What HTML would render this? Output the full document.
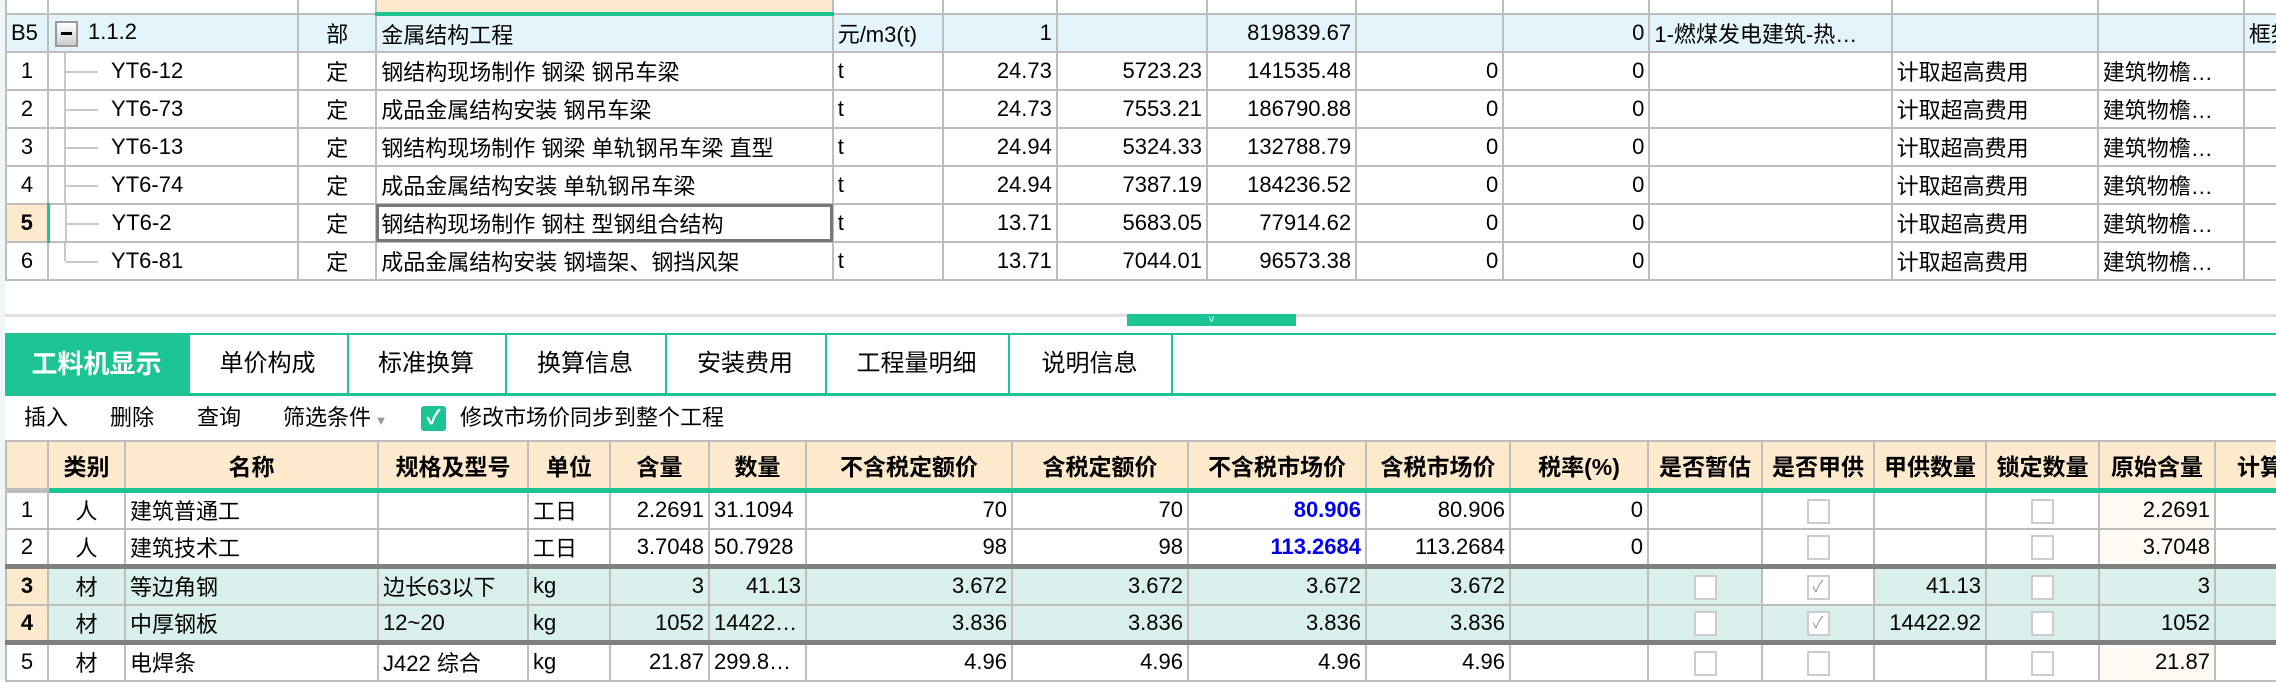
<!DOCTYPE html>
<html><head><meta charset="utf-8"><style>
body{margin:0;width:2276px;height:680px;overflow:hidden;background:#fff;position:relative;font-family:"Liberation Sans","Noto Sans CJK SC",sans-serif;font-size:22px;color:#000}
table{border-collapse:collapse;table-layout:fixed;position:absolute}
td{border:2px solid #bdbdbd;padding:0 4px;white-space:nowrap;overflow:hidden}
.r{text-align:right}.c{text-align:center}
#t1{left:5px;top:-2px;width:2300px}
#t1 tr{height:38px}
#t1 tr.h{height:15px}
.b5 td{background:#e3f5fa}
.tree{position:relative;padding-left:62px}
.tree:before{content:"";position:absolute;left:15px;top:-4px;bottom:-4px;border-left:2px solid #c8c8c8}
.tree.last:before{bottom:50%}
.tree:after{content:"";position:absolute;left:17px;top:50%;width:32px;border-top:2px solid #c8c8c8}
.exp{display:inline-block;width:19px;height:22px;border:2px solid #999;background:linear-gradient(#fff,#ccc);vertical-align:middle;position:relative;margin-right:10px}
.exp:after{content:"";position:absolute;left:4px;right:4px;top:9px;border-top:3px solid #000}
.sel{outline:3px solid #777;outline-offset:-3px}
.pk{background:#fde9cc;font-weight:bold}
#tabs{position:absolute;left:5px;top:333px;width:2271px;height:58px;border-top:2px solid #1dc493;border-bottom:3px solid #1dc493}
.tab{position:absolute;top:0;height:58px;border-right:2px solid #1dc493;text-align:center;line-height:58px;font-size:24px}
#tb{position:absolute;top:400px;left:0;height:36px;line-height:36px;font-size:22px}
#tb span{position:absolute;white-space:nowrap}
#t2{left:5px;top:440px;width:2300px}
#t2 tr{height:38px}
#t2 tr.hd td{background:#fde9cc;font-weight:bold;font-size:23px;text-align:center;height:46px;border-bottom:5px solid #1dc493}
#t2 tr.hd td:first-child{border-bottom-color:#bdbdbd}
.m td{background:#d8efeb}
.tkb td{border-bottom:5px solid #808080}
.cb{display:inline-block;width:19px;height:21px;border:2px solid #ccc;background:#fff;vertical-align:middle;font-size:16px;line-height:21px;color:#999;text-align:center}
.bl{color:#0000ee;font-weight:bold}
.og{background:#fffaf4}
</style></head><body>
<div style="position:absolute;left:0;top:0;width:5px;height:680px;background:#eef6f9"></div>
<table id="t1">
<colgroup><col style="width:42px"><col style="width:250px"><col style="width:78px"><col style="width:456px"><col style="width:110px"><col style="width:114px"><col style="width:150px"><col style="width:149px"><col style="width:147px"><col style="width:146px"><col style="width:242px"><col style="width:206px"><col style="width:146px"><col style="width:60px"></colgroup>
<tr class="h"><td></td><td></td><td></td><td style="background:#fde9cc;border-bottom:4px solid #1dc493"></td><td></td><td></td><td></td><td></td><td></td><td></td><td></td><td></td><td></td><td></td></tr>
<tr class="b5"><td>B5</td><td style="padding-left:6px"><span class="exp"></span>1.1.2</td><td class="c">部</td><td>金属结构工程</td><td>元/m3(t)</td><td class="r">1</td><td></td><td class="r">819839.67</td><td></td><td class="r">0</td><td>1-燃煤发电建筑-热…</td><td></td><td></td><td>框架</td></tr>
<tr><td class="c">1</td><td class="tree">YT6-12</td><td class="c">定</td><td>钢结构现场制作 钢梁 钢吊车梁</td><td>t</td><td class="r">24.73</td><td class="r">5723.23</td><td class="r">141535.48</td><td class="r">0</td><td class="r">0</td><td></td><td>计取超高费用</td><td>建筑物檐…</td><td></td></tr>
<tr><td class="c">2</td><td class="tree">YT6-73</td><td class="c">定</td><td>成品金属结构安装 钢吊车梁</td><td>t</td><td class="r">24.73</td><td class="r">7553.21</td><td class="r">186790.88</td><td class="r">0</td><td class="r">0</td><td></td><td>计取超高费用</td><td>建筑物檐…</td><td></td></tr>
<tr><td class="c">3</td><td class="tree">YT6-13</td><td class="c">定</td><td>钢结构现场制作 钢梁 单轨钢吊车梁 直型</td><td>t</td><td class="r">24.94</td><td class="r">5324.33</td><td class="r">132788.79</td><td class="r">0</td><td class="r">0</td><td></td><td>计取超高费用</td><td>建筑物檐…</td><td></td></tr>
<tr><td class="c">4</td><td class="tree">YT6-74</td><td class="c">定</td><td>成品金属结构安装 单轨钢吊车梁</td><td>t</td><td class="r">24.94</td><td class="r">7387.19</td><td class="r">184236.52</td><td class="r">0</td><td class="r">0</td><td></td><td>计取超高费用</td><td>建筑物檐…</td><td></td></tr>
<tr><td class="c pk" style="border-right:3px solid #1dc493">5</td><td class="tree">YT6-2</td><td class="c">定</td><td class="sel">钢结构现场制作 钢柱 型钢组合结构</td><td>t</td><td class="r">13.71</td><td class="r">5683.05</td><td class="r">77914.62</td><td class="r">0</td><td class="r">0</td><td></td><td>计取超高费用</td><td>建筑物檐…</td><td></td></tr>
<tr><td class="c">6</td><td class="tree last">YT6-81</td><td class="c">定</td><td>成品金属结构安装 钢墙架、钢挡风架</td><td>t</td><td class="r">13.71</td><td class="r">7044.01</td><td class="r">96573.38</td><td class="r">0</td><td class="r">0</td><td></td><td>计取超高费用</td><td>建筑物檐…</td><td></td></tr>
</table>
<div style="position:absolute;left:5px;top:314px;width:2271px;height:3px;background:#e0e0e0"></div>
<div style="position:absolute;left:1127px;top:314px;width:169px;height:12px;background:#1dc493;color:#bff;font-size:11px;line-height:10px;text-align:center">v</div>
<div id="tabs">
<div class="tab" style="left:0;width:183px;background:#1dc493;color:#fff;font-weight:bold;font-size:26px">工料机显示</div>
<div class="tab" style="left:183px;width:159px">单价构成</div>
<div class="tab" style="left:342px;width:158px">标准换算</div>
<div class="tab" style="left:500px;width:160px">换算信息</div>
<div class="tab" style="left:660px;width:160px">安装费用</div>
<div class="tab" style="left:820px;width:183px">工程量明细</div>
<div class="tab" style="left:1003px;width:163px">说明信息</div>
</div>
<div id="tb">
<span style="left:24px">插入</span><span style="left:110px">删除</span><span style="left:197px">查询</span><span style="left:283px">筛选条件<span style="position:static;color:#999;font-size:13px"> ▼</span></span>
<span style="left:421px;top:6px;width:25px;height:25px;background:#1dc493;border-radius:3px;color:#fff;font-weight:bold;font-size:20px;line-height:25px;text-align:center">✓</span>
<span style="left:460px">修改市场价同步到整个工程</span>
</div>
<table id="t2">
<colgroup><col style="width:42px"><col style="width:77px"><col style="width:253px"><col style="width:150px"><col style="width:82px"><col style="width:99px"><col style="width:97px"><col style="width:206px"><col style="width:176px"><col style="width:178px"><col style="width:144px"><col style="width:138px"><col style="width:114px"><col style="width:112px"><col style="width:112px"><col style="width:113px"><col style="width:116px"><col style="width:90px"></colgroup>
<tr class="hd"><td></td><td>类别</td><td>名称</td><td>规格及型号</td><td>单位</td><td>含量</td><td>数量</td><td>不含税定额价</td><td>含税定额价</td><td>不含税市场价</td><td>含税市场价</td><td>税率(%)</td><td>是否暂估</td><td>是否甲供</td><td>甲供数量</td><td>锁定数量</td><td>原始含量</td><td>计算</td></tr>
<tr><td class="c">1</td><td class="c">人</td><td>建筑普通工</td><td></td><td>工日</td><td class="r">2.2691</td><td>31.1094</td><td class="r">70</td><td class="r">70</td><td class="r bl">80.906</td><td class="r">80.906</td><td class="r">0</td><td></td><td class="c"><span class="cb"></span></td><td></td><td class="c"><span class="cb"></span></td><td class="r og">2.2691</td><td></td></tr>
<tr class="tkb"><td class="c">2</td><td class="c">人</td><td>建筑技术工</td><td></td><td>工日</td><td class="r">3.7048</td><td>50.7928</td><td class="r">98</td><td class="r">98</td><td class="r bl">113.2684</td><td class="r">113.2684</td><td class="r">0</td><td></td><td class="c"><span class="cb"></span></td><td></td><td class="c"><span class="cb"></span></td><td class="r og">3.7048</td><td></td></tr>
<tr class="m"><td class="c pk" style="background:#fde9cc">3</td><td class="c">材</td><td>等边角钢</td><td>边长63以下</td><td>kg</td><td class="r">3</td><td class="r">41.13</td><td class="r">3.672</td><td class="r">3.672</td><td class="r">3.672</td><td class="r">3.672</td><td></td><td class="c"><span class="cb"></span></td><td class="c" style="background:#fff"><span class="cb">✓</span></td><td class="r">41.13</td><td class="c"><span class="cb"></span></td><td class="r">3</td><td></td></tr>
<tr class="m tkb"><td class="c pk" style="background:#fde9cc">4</td><td class="c">材</td><td>中厚钢板</td><td>12~20</td><td>kg</td><td class="r">1052</td><td>14422…</td><td class="r">3.836</td><td class="r">3.836</td><td class="r">3.836</td><td class="r">3.836</td><td></td><td class="c"><span class="cb"></span></td><td class="c"><span class="cb">✓</span></td><td class="r">14422.92</td><td class="c"><span class="cb"></span></td><td class="r">1052</td><td></td></tr>
<tr><td class="c">5</td><td class="c">材</td><td>电焊条</td><td>J422 综合</td><td>kg</td><td class="r">21.87</td><td>299.8…</td><td class="r">4.96</td><td class="r">4.96</td><td class="r">4.96</td><td class="r">4.96</td><td></td><td class="c"><span class="cb"></span></td><td class="c"><span class="cb"></span></td><td></td><td class="c"><span class="cb"></span></td><td class="r og">21.87</td><td></td></tr>
</table>
</body></html>
